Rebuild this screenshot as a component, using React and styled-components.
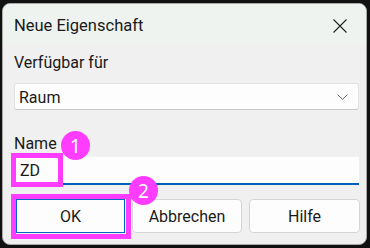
import React from "react";
import styled, {createGlobalStyle, css} from "styled-components";

const GlobalStyle = createGlobalStyle`
  html, body {
    margin: 0;
    padding: 0;
    background: #111;
  }
  * {
    box-sizing: border-box;
  }
`;

const magenta = "#ff3cff";

const Frame = styled.div`
  width: 370px;
  height: 248px;
  padding: 3px 3px 3px 2px;
  background: #111;
  font-family: Roboto, "Noto Sans", sans-serif;
  color: #1a1a1a;
`;

const Dialog = styled.div`
  position: relative;
  width: 100%;
  height: 100%;
  display: flex;
  flex-direction: column;
  background: #f0f0f0;
  border: 1px solid #a9a9a9;
  border-radius: 8px;
  overflow: hidden;
`;

const TitleBar = styled.div`
  height: 41px;
  display: flex;
  align-items: center;
  justify-content: space-between;
  padding: 2px 19px 0 11px;
  background: #eef3f0;
  font-size: 16.5px;
`;

const Content = styled.div`
  position: relative;
  flex: 1;
  display: flex;
  flex-direction: column;
  padding: 0 5px 0 11px;
`;

const Label = styled.div`
  font-size: 16px;
  line-height: 22px;
  margin-top: ${props => props.top}px;
`;

const Select = styled.div`
  height: 27px;
  margin-top: ${props => props.top}px;
  margin-right: 2px;
  display: flex;
  align-items: center;
  justify-content: space-between;
  padding: 1px 10px 0 4px;
  background: #fdfdfd;
  border: 1px solid #e2e2e2;
  border-bottom-color: #c8c8c8;
  border-radius: 3px;
  font-size: 16px;
`;

const NameRow = styled.div`
  position: relative;
`;

const Input = styled.div`
  position: relative;
  height: 28px;
  margin-top: 2px;
  margin-right: 2px;
  display: flex;
  align-items: center;
  padding: 1px 0 0 6px;
  background: #fdfdfd;
  border-bottom: 2px solid #005fb8;
  font-size: 16px;
`;

const Buttons = styled.div`
  position: relative;
  display: grid;
  grid-template-columns: 109px 110px 111px;
  gap: 7px;
  margin-top: 14px;
  margin-left: 2px;
`;

const Button = styled.div`
  height: 34px;
  display: flex;
  align-items: center;
  justify-content: center;
  padding-top: 1px;
  background: #fdfdfd;
  border: 1px solid #d6d6d6;
  border-radius: 4px;
  font-size: 16px;
  ${props => props.primary && css`
    border-color: #0067c0;
    border-radius: 0;
  `}
`;

const Badge = styled.div`
  position: absolute;
  left: ${props => props.x}px;
  top: ${props => props.y}px;
  width: 29px;
  height: 29px;
  border-radius: 50%;
  background: ${magenta};
  color: #fff;
  display: flex;
  align-items: center;
  justify-content: center;
  font-family: "Noto Sans", sans-serif;
  font-size: 19px;
  z-index: 2;
`;

const Highlight = styled.div`
  position: absolute;
  left: ${props => props.x}px;
  top: ${props => props.y}px;
  width: ${props => props.w}px;
  height: ${props => props.h}px;
  border: 5px solid ${magenta};
  z-index: 1;
`;

function CloseIcon() {
    return (
        <svg width="14" height="14" viewBox="0 0 14 14">
            <path d="M0.5 0.5 L13.5 13.5 M13.5 0.5 L0.5 13.5" stroke="#222" strokeWidth="1.1" fill="none"/>
        </svg>
    )
}

function Chevron() {
    return (
        <svg width="11" height="6" viewBox="0 0 11 6">
            <path d="M0.5 0.5 L5.5 5.3 L10.5 0.5" stroke="#606060" strokeWidth="1" fill="none"/>
        </svg>
    )
}

export default function App() {
    return (
        <Frame>
            <GlobalStyle/>
            <Dialog>
                <TitleBar>
                    <span>Neue Eigenschaft</span>
                    <CloseIcon/>
                </TitleBar>
                <Content>
                    <Label top={7}>Verfügbar für</Label>
                    <Select top={9}>
                        <span>Raum</span>
                        <Chevron/>
                    </Select>
                    <NameRow>
                        <Label top={23}>Name</Label>
                    </NameRow>
                    <Input>ZD</Input>
                    <Buttons>
                        <Button primary>OK</Button>
                        <Button>Abbrechen</Button>
                        <Button>Hilfe</Button>
                    </Buttons>
                    <Badge x={58} y={86}>1</Badge>
                    <Badge x={126} y={131}>2</Badge>
                    <Highlight x={8} y={108} w={52} h={34}/>
                    <Highlight x={8} y={149} w={120} h={45}/>
                </Content>
            </Dialog>
        </Frame>
    )
}
